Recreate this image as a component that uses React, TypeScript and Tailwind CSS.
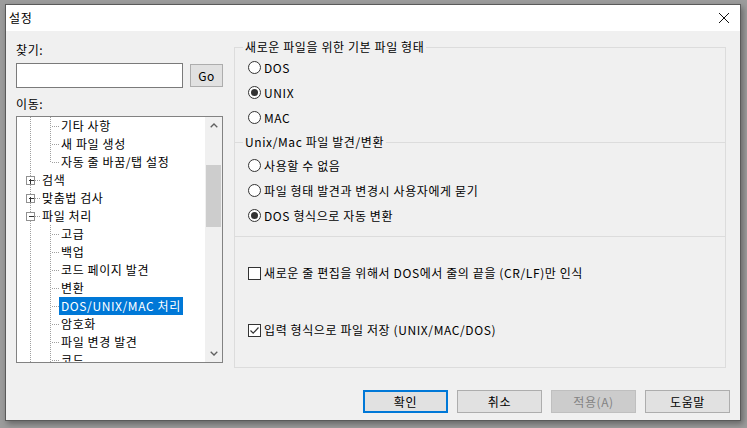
import React from 'react';

type Row = {
  text: string;
  level: 1 | 2;
  box?: 'plus' | 'minus';
  last?: boolean;
  selected?: boolean;
};

const treeRows: Row[] = [
  { text: '기타 사항', level: 2 },
  { text: '새 파일 생성', level: 2 },
  { text: '자동 줄 바꿈/탭 설정', level: 2, last: true },
  { text: '검색', level: 1, box: 'plus' },
  { text: '맞춤법 검사', level: 1, box: 'plus' },
  { text: '파일 처리', level: 1, box: 'minus' },
  { text: '고급', level: 2 },
  { text: '백업', level: 2 },
  { text: '코드 페이지 발견', level: 2 },
  { text: '변환', level: 2 },
  { text: 'DOS/UNIX/MAC 처리', level: 2, selected: true },
  { text: '암호화', level: 2 },
  { text: '파일 변경 발견', level: 2 },
  { text: '코드', level: 2 },
];

const LINE = '#a0a0a0';

function TreeGuide({ row }: { row: Row }) {
  if (row.level === 1) {
    return (
      <svg width="23" height="18" className="shrink-0" shapeRendering="crispEdges">
        <line x1="13.5" y1="0" x2="13.5" y2="18" stroke={LINE} strokeDasharray="1 1" />
        <line x1="18" y1="9.5" x2="23" y2="9.5" stroke={LINE} strokeDasharray="1 1" />
        <rect x="9.5" y="5.5" width="8" height="8" fill="#fff" stroke="#919191" />
        <line x1="11.5" y1="9.5" x2="16.5" y2="9.5" stroke="#333" />
        {row.box === 'plus' && <line x1="13.5" y1="7.5" x2="13.5" y2="12.5" stroke="#333" />}
      </svg>
    );
  }
  return (
    <svg width="42" height="18" className="shrink-0" shapeRendering="crispEdges">
      <line x1="13.5" y1="0" x2="13.5" y2="18" stroke={LINE} strokeDasharray="1 1" />
      <line x1="33.5" y1="0" x2="33.5" y2={row.last ? 10 : 18} stroke={LINE} strokeDasharray="1 1" />
      <line x1="35" y1="9.5" x2="42" y2="9.5" stroke={LINE} strokeDasharray="1 1" />
    </svg>
  );
}

function Chevron({ down }: { down?: boolean }) {
  return (
    <svg width="8" height="5" viewBox="0 0 8 5">
      <path
        d={down ? 'M0.7 0.8 L4 4 L7.3 0.8' : 'M0.7 4.2 L4 1 L7.3 4.2'}
        fill="none"
        stroke="#606060"
        strokeWidth="1.3"
      />
    </svg>
  );
}

function Radio({ label, checked }: { label: string; checked?: boolean }) {
  return (
    <div className="h-[25px] flex items-center">
      <span className="w-[13px] h-[13px] rounded-full border border-[#333] bg-white flex items-center justify-center">
        {checked && <span className="w-[7px] h-[7px] rounded-full bg-[#333]" />}
      </span>
      <span className="ml-[3px]">{label}</span>
    </div>
  );
}

function Check({ label, checked }: { label: string; checked?: boolean }) {
  return (
    <div className="h-[20px] flex items-center">
      <span className="w-[13px] h-[13px] border border-[#333] bg-white flex items-center justify-center">
        {checked && (
          <svg width="11" height="11" viewBox="0 0 11 11">
            <path d="M1.5 5.5 L4.2 8.2 L9.5 2.5" fill="none" stroke="#333" strokeWidth="1.2" />
          </svg>
        )}
      </span>
      <span className="ml-[3px]">{label}</span>
    </div>
  );
}

function SectionHeader({ children }: { children: React.ReactNode }) {
  return (
    <div className="-mt-[9px] h-[16px] leading-[16px] pl-[8px]">
      <span className="bg-[#f0f0f0] px-[2px]">{children}</span>
    </div>
  );
}

function Btn({ label, focused, disabled }: { label: string; focused?: boolean; disabled?: boolean }) {
  const cls = focused
    ? 'border-2 border-[#0078d7] bg-[#e1e1e1] text-black'
    : disabled
      ? 'border border-[#bfbfbf] bg-[#cccccc] text-[#838383]'
      : 'border border-[#adadad] bg-[#e1e1e1] text-black';
  return (
    <button className={`w-[85px] h-[23px] flex items-center justify-center text-[12px] tracking-[0.6px] ${cls}`}>
      {label}
    </button>
  );
}

export default function App() {
  return (
    <div className="w-[747px] h-[428px] bg-[#9c9c9c] pt-[4px] pl-[5px] overflow-hidden font-['Noto_Sans_CJK_KR','Noto_Sans',sans-serif] text-[12px] tracking-[0.6px] text-black">
      <div className="w-[736px] h-[417px] border border-[#5a5a5a] bg-[#f0f0f0] flex flex-col shadow-[2px_3px_6px_rgba(0,0,0,0.35)]">
        {/* title bar */}
        <div className="h-[26px] bg-white flex items-center justify-between pl-[3px] pr-[10px]">
          <span className="text-[12px] leading-none">설정</span>
          <svg width="12" height="12" viewBox="0 0 12 12">
            <path d="M1 1 L11 11 M11 1 L1 11" stroke="#111" strokeWidth="1" />
          </svg>
        </div>

        <div className="flex-1 flex flex-col px-[10px]">
          <div className="flex items-start gap-[11px]">
            {/* left column */}
            <div className="w-[207px] pt-[11px] flex flex-col">
              <div className="h-[16px] leading-[16px]">찾기:</div>
              <div className="mt-[5px] flex items-center gap-[7px]">
                <div className="w-[167px] h-[25px] bg-white border border-[#7a7a7a]" />
                <button className="w-[33px] h-[23px] border border-[#adadad] bg-[#e1e1e1] text-[12px]">Go</button>
              </div>
              <div className="mt-[8px] h-[16px] leading-[16px]">이동:</div>
              <div className="mt-[4px] h-[247px] bg-white border border-[#828282] flex">
                <div className="flex-1 overflow-hidden">
                  {treeRows.map((row, i) => (
                    <div key={i} className="h-[18px] flex items-center">
                      <TreeGuide row={row} />
                      <span
                        className={`px-[2px] h-[18px] leading-[18px] whitespace-nowrap ${
                          row.selected ? 'bg-[#0078d7] text-white' : ''
                        }`}
                      >
                        {row.text}
                      </span>
                    </div>
                  ))}
                </div>
                <div className="w-[17px] bg-[#f0f0f0] flex flex-col">
                  <div className="h-[17px] flex items-center justify-center">
                    <Chevron />
                  </div>
                  <div className="flex-1 flex justify-center">
                    <div className="mt-[31px] w-[15px] h-[62px] bg-[#cdcdcd]" />
                  </div>
                  <div className="h-[17px] flex items-center justify-center">
                    <Chevron down />
                  </div>
                </div>
              </div>
            </div>

            {/* right panel */}
            <div className="mt-[16px] w-[492px] border-l border-r border-b border-[#dcdcdc] flex flex-col">
              <div className="h-[95px] border-t border-[#dcdcdc]">
                <SectionHeader>새로운 파일을 위한 기본 파일 형태</SectionHeader>
                <div className="pl-[13px]">
                  <Radio label="DOS" />
                  <Radio label="UNIX" checked />
                  <Radio label="MAC" />
                </div>
              </div>
              <div className="h-[94px] border-t border-[#dcdcdc]">
                <SectionHeader>Unix/Mac 파일 발견/변환</SectionHeader>
                <div className="pl-[13px] mt-[3px]">
                  <Radio label="사용할 수 없음" />
                  <Radio label="파일 형태 발견과 변경시 사용자에게 묻기" />
                  <Radio label="DOS 형식으로 자동 변환" checked />
                </div>
              </div>
              <div className="h-[131px] border-t border-[#dcdcdc] pl-[13px] pt-[26px]">
                <Check label="새로운 줄 편집을 위해서 DOS에서 줄의 끝을 (CR/LF)만 인식" />
                <div className="mt-[37px]">
                  <Check label="입력 형식으로 파일 저장 (UNIX/MAC/DOS)" checked />
                </div>
              </div>
            </div>
          </div>

          {/* footer buttons */}
          <div className="mt-auto pb-[7px] flex justify-end gap-[9px]">
            <Btn label="확인" focused />
            <Btn label="취소" />
            <Btn label="적용(A)" disabled />
            <Btn label="도움말" />
          </div>
        </div>
      </div>
    </div>
  );
}
